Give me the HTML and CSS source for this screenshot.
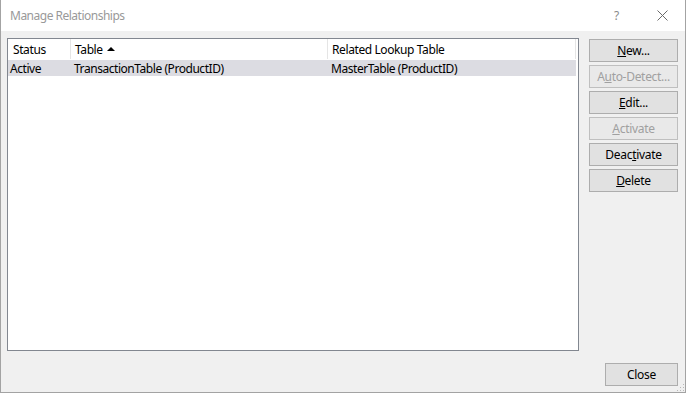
FILE: index.html
```html
<!DOCTYPE html>
<html>
<head>
<meta charset="utf-8">
<link rel="stylesheet" href="styles.css">
</head>
<body>
<div class="window">
  <div class="titlebar">
    <span class="title">Manage Relationships</span>
    <span class="help">?</span>
    <span class="close-x">
      <svg width="11" height="11" viewBox="0 0 11 11"><path d="M0.5 0.5 L10.5 10.5 M10.5 0.5 L0.5 10.5" stroke="#6a6a6a" stroke-width="1" fill="none"/></svg>
    </span>
  </div>
  <div class="content">
    <div class="main">
      <div class="listbox">
        <div class="header">
          <div class="hcell c1">Status</div>
          <div class="hcell c2">Table <span class="sort"></span></div>
          <div class="hcell c3">Related Lookup Table</div>
        </div>
        <div class="row selected">
          <div class="cell c1">Active</div>
          <div class="cell c2">TransactionTable (ProductID)</div>
          <div class="cell c3">MasterTable (ProductID)</div>
        </div>
      </div>
      <div class="buttons">
        <button class="btn"><u>N</u>ew...</button>
        <button class="btn disabled">A<u>u</u>to-Detect...</button>
        <button class="btn"><u>E</u>dit...</button>
        <button class="btn disabled"><u>A</u>ctivate</button>
        <button class="btn">Deac<u>t</u>ivate</button>
        <button class="btn"><u>D</u>elete</button>
      </div>
    </div>
    <div class="footer">
      <button class="btn close">Close</button>
    </div>
    <svg class="grip" width="8" height="8" viewBox="0 0 8 8">
      <rect x="6" y="0" width="1" height="1" fill="#b8b8b8"/>
      <rect x="3" y="3" width="1" height="1" fill="#b8b8b8"/>
      <rect x="6" y="3" width="1" height="1" fill="#b8b8b8"/>
      <rect x="0" y="6" width="1" height="1" fill="#b8b8b8"/>
      <rect x="3" y="6" width="1" height="1" fill="#b8b8b8"/>
      <rect x="6" y="6" width="1" height="1" fill="#b8b8b8"/>
    </svg>
  </div>
</div>
</body>
</html>
```
FILE: styles.css
```css
html, body {
  margin: 0;
  padding: 0;
  background: #ffffff;
}
body {
  font-family: "Noto Sans", "Open Sans", sans-serif;
  font-size: 12px;
  color: #000;
}
.window {
  width: 686px;
  height: 393px;
  box-sizing: border-box;
  border: 1px solid #a3a3a3;
  border-top: none;
  display: flex;
  flex-direction: column;
  background: #f0f0f0;
}
.titlebar {
  height: 31px;
  background: #ffffff;
  display: flex;
  align-items: center;
  position: relative;
}
.title {
  margin-left: 9px;
  color: #999999;
  font-size: 12px;
  letter-spacing: -0.5px;
  margin-top: -1px;
}
.help {
  position: absolute;
  left: 613px;
  top: 7px;
  color: #8a8a8a;
  font-size: 12px;
}
.close-x {
  position: absolute;
  left: 656px;
  top: 10px;
  width: 11px;
  height: 11px;
}
.close-x svg { display: block; }
.content {
  flex: 1;
  display: flex;
  flex-direction: column;
  padding: 7px 7px 6px 6px;
  position: relative;
}
.main {
  display: flex;
  gap: 10px;
  height: 313px;
}
.listbox {
  width: 572px;
  height: 313px;
  box-sizing: border-box;
  border: 1px solid #828790;
  background: #ffffff;
}
.header {
  display: flex;
  height: 20px;
  align-items: stretch;
}
.hcell {
  box-sizing: border-box;
  display: flex;
  align-items: center;
  padding-top: 1px;
  letter-spacing: -0.4px;
  border-right: 1px solid #e5e5e5;
}
.header .c1 { width: 63px; padding-left: 5px; }
.header .c2 { width: 257px; padding-left: 4px; }
.header .c3 { width: 248px; padding-left: 4px; border-right: 1px solid #e5e5e5; }
.sort {
  display: inline-block;
  width: 0;
  height: 0;
  border-left: 4px solid transparent;
  border-right: 4px solid transparent;
  border-bottom: 4px solid #000;
  margin-left: 4px;
  margin-top: -2px;
}
.row {
  display: flex;
  height: 16px;
  margin-top: 1px;
  margin-right: 2px;
  align-items: center;
}
.row.selected { background: #dcdce2; }
.cell {
  box-sizing: border-box;
  letter-spacing: -0.45px;
  white-space: nowrap;
}
.row .c1 { width: 63px; padding-left: 2px; }
.row .c2 { width: 257px; padding-left: 3px; }
.row .c3 { flex: 1; padding-left: 3px; }
.buttons {
  display: flex;
  flex-direction: column;
  gap: 3px;
  margin-top: 1px;
}
.btn {
  width: 89px;
  height: 23px;
  box-sizing: border-box;
  border: 1px solid #adadad;
  background: #e1e1e1;
  font-family: "Noto Sans", "Open Sans", sans-serif;
  font-size: 12px;
  letter-spacing: -0.3px;
  color: #000;
  padding: 0;
  display: flex;
  align-items: center;
  justify-content: center;
}
.btn u { text-underline-offset: 1px; }
.btn.disabled {
  color: #a0a0a0;
  border-color: #bfbfbf;
  background: #e9e9e9;
}
.footer {
  display: flex;
  justify-content: flex-end;
  margin-top: 12px;
}
.btn.close { width: 73px; }
.grip {
  position: absolute;
  right: 0;
  bottom: 0;
}
```
